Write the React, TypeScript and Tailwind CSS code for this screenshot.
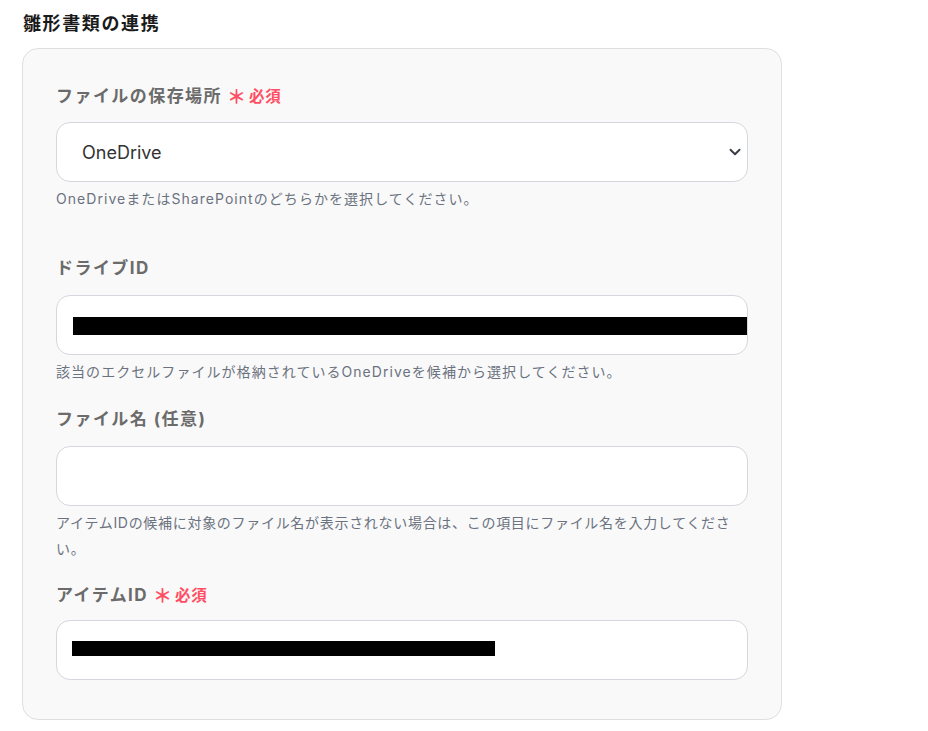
import { ChevronDown } from 'lucide-react';

const FONT = "font-['Inter','Noto_Sans_CJK_JP',sans-serif]";

function Label({ text, required }: { text: string; required?: boolean }) {
  return (
    <div className="flex items-center h-[26px] text-[17px] font-bold tracking-[0.085em] text-[#6b6b6b]">
      <span>{text}</span>
      {required && (
        <span className="ml-[5px] flex items-center text-[#ff4d63] font-bold">
          <span className="text-[19px] leading-none tracking-normal">＊</span>
          <span className="ml-[3px] text-[15.5px] tracking-[0.05em]">必須</span>
        </span>
      )}
    </div>
  );
}

function Help({
  children,
  wide = true,
}: {
  children: React.ReactNode;
  wide?: boolean;
}) {
  return (
    <p
      className={`mt-1 text-[14px] leading-[26px] text-[#6b7280] ${
        wide ? 'tracking-[0.075em]' : 'tracking-[0.05em]'
      }`}
    >
      {children}
    </p>
  );
}

function Box({ children }: { children?: React.ReactNode }) {
  return (
    <div className="relative h-[60px] rounded-[14px] border border-[#d4d7dd] bg-white overflow-hidden">
      {children}
    </div>
  );
}

export default function App() {
  return (
    <div className={`${FONT} min-h-screen bg-white px-[22px] pt-[10px]`}>
      <h1 className="ml-[1px] h-[26px] text-[18px] font-bold tracking-[0.09em] text-[#1a1a1a]">
        雛形書類の連携
      </h1>

      <div className="mt-[12px] w-[760px] rounded-[16px] border border-[#dedfe3] bg-[#f9f9f9] px-[33px] pt-[35px] pb-[39px]">
        {/* ファイルの保存場所 */}
        <Label text="ファイルの保存場所" required />
        <div className="mt-[12px]">
          <Box>
            <div className="flex h-full items-center justify-between pl-[25px] pr-[3px]">
              <span className="text-[18px] text-[#333]">OneDrive</span>
              <ChevronDown className="size-[18px] text-[#3a3f47]" strokeWidth={2.6} />
            </div>
          </Box>
        </div>
        <Help>OneDriveまたはSharePointのどちらかを選択してください。</Help>

        {/* ドライブID */}
        <div className="mt-[44px]">
          <Label text="ドライブID" />
        </div>
        <div className="mt-[13px]">
          <Box>
            <div className="absolute left-[16px] top-[21px] h-[18px] w-[700px] bg-black" />
          </Box>
        </div>
        <Help>該当のエクセルファイルが格納されているOneDriveを候補から選択してください。</Help>

        {/* ファイル名 */}
        <div className="mt-[22px]">
          <Label text="ファイル名 (任意)" />
        </div>
        <div className="mt-[13px]">
          <Box />
        </div>
        <Help wide={false}>
          アイテムIDの候補に対象のファイル名が表示されない場合は、この項目にファイル名を入力してください。
        </Help>

        {/* アイテムID */}
        <div className="mt-[21px]">
          <Label text="アイテムID" required />
        </div>
        <div className="mt-[11px]">
          <Box>
            <div className="absolute left-[15px] top-[20px] h-[15px] w-[423px] bg-black" />
          </Box>
        </div>
      </div>
    </div>
  );
}
